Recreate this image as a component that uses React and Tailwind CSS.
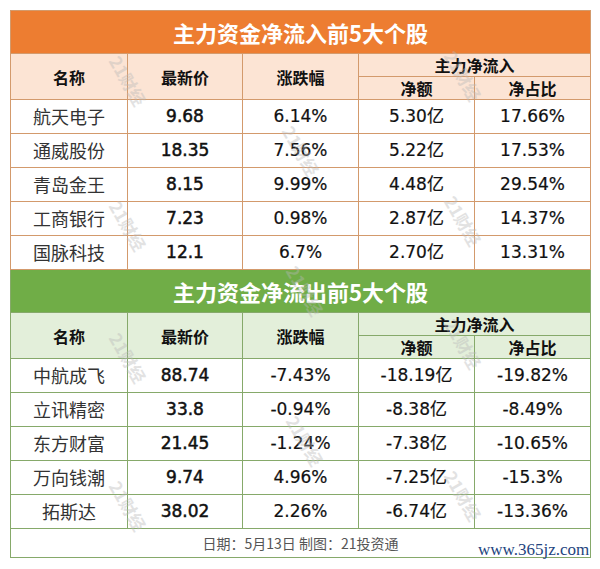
import React from "react";

const inflow = [
  ["航天电子", "9.68", "6.14%", "5.30亿", "17.66%"],
  ["通威股份", "18.35", "7.56%", "5.22亿", "17.53%"],
  ["青岛金王", "8.15", "9.99%", "4.48亿", "29.54%"],
  ["工商银行", "7.23", "0.98%", "2.87亿", "14.37%"],
  ["国脉科技", "12.1", "6.7%", "2.70亿", "13.31%"],
];

const outflow = [
  ["中航成飞", "88.74", "-7.43%", "-18.19亿", "-19.82%"],
  ["立讯精密", "33.8", "-0.94%", "-8.38亿", "-8.49%"],
  ["东方财富", "21.45", "-1.24%", "-7.38亿", "-10.65%"],
  ["万向钱潮", "9.74", "4.96%", "-7.25亿", "-15.3%"],
  ["拓斯达", "38.02", "2.26%", "-6.74亿", "-13.36%"],
];

const marks = [
  [127, 80], [462, 75],
  [127, 225], [300, 150], [462, 220],
  [127, 357], [304, 290], [462, 343],
  [127, 505], [304, 440], [462, 495],
];

const CJK = "font-['Noto_Sans_CJK_SC',sans-serif]";
const NUM = "font-['DejaVu_Sans','Noto_Sans_CJK_SC',sans-serif]";

function Section({ title, rows, theme }) {
  const orange = theme === "orange";
  const bd = orange ? "border-[#d39a6c]" : "border-[#86a96a]";
  const titleBg = orange ? "bg-[#ed7d31]" : "bg-[#70ad47]";
  const headBg = orange ? "bg-[#fce4d4]" : "bg-[#e3efda]";
  const th = `border ${bd} ${headBg} ${CJK} text-center align-middle p-0 text-[16px] font-bold text-[#111]`;
  const td = `border ${bd} bg-white text-center align-middle p-0`;
  return (
    <tbody>
      <tr>
        <td
          colSpan={5}
          className={`${titleBg} border ${bd} ${CJK} h-[43px] p-0 text-center align-middle text-white text-[22px] font-bold`}
        >
          {title}
        </td>
      </tr>
      <tr className="h-[23px]">
        <td rowSpan={2} className={th}>名称</td>
        <td rowSpan={2} className={th}>最新价</td>
        <td rowSpan={2} className={th}>涨跌幅</td>
        <td colSpan={2} className={`${th} leading-[20px]`}>主力净流入</td>
      </tr>
      <tr className="h-[23px]">
        <td className={`${th} leading-[20px]`}>净额</td>
        <td className={`${th} leading-[20px]`}>净占比</td>
      </tr>
      {rows.map((r) => (
        <tr key={r[0]} className="h-[34px]">
          <td className={`${td} ${CJK} text-[18px] text-[#333]`}>{r[0]}</td>
          <td className={`${td} ${NUM} text-[17px] text-[#111] [-webkit-text-stroke:0.5px_#111]`}>{r[1]}</td>
          <td className={`${td} ${NUM} text-[17px] text-[#111] [-webkit-text-stroke:0.2px_#111]`}>{r[2]}</td>
          <td className={`${td} ${NUM} text-[17px] text-[#111] [-webkit-text-stroke:0.2px_#111]`}>{r[3]}</td>
          <td className={`${td} ${NUM} text-[17px] text-[#111] [-webkit-text-stroke:0.2px_#111]`}>{r[4]}</td>
        </tr>
      ))}
    </tbody>
  );
}

export default function App() {
  return (
    <div className="relative w-[600px] h-[569px] bg-white overflow-hidden">
      <div className="pt-[10px] pl-[10px]">
        <table className="w-[580px] table-fixed border-collapse">
          <colgroup>
            <col className="w-[117px]" />
            <col className="w-[115px]" />
            <col className="w-[116px]" />
            <col className="w-[116px]" />
            <col className="w-[116px]" />
          </colgroup>
          <Section title="主力资金净流入前5大个股" rows={inflow} theme="orange" />
          <Section title="主力资金净流出前5大个股" rows={outflow} theme="green" />
          <tbody>
            <tr className="h-[29px]">
              <td
                colSpan={5}
                className={`border border-[#86a96a] bg-white ${CJK} text-center align-middle p-0 text-[14px] text-[#555]`}
              >
                日期：5月13日 制图：21投资通
              </td>
            </tr>
          </tbody>
        </table>
      </div>

      {marks.map(([x, y], i) => (
        <span
          key={i}
          className={`absolute pointer-events-none ${CJK} text-[17px] font-bold text-[#b8b8b8] opacity-40 rotate-[60deg] whitespace-nowrap`}
          style={{ left: x - 26, top: y - 12 }}
        >
          21财经
        </span>
      ))}

      <span className="absolute left-[478px] top-[540px] font-['Liberation_Serif',serif] text-[17px] leading-[20px] text-[#23447e] whitespace-nowrap">
        www.365jz.com
      </span>
    </div>
  );
}
